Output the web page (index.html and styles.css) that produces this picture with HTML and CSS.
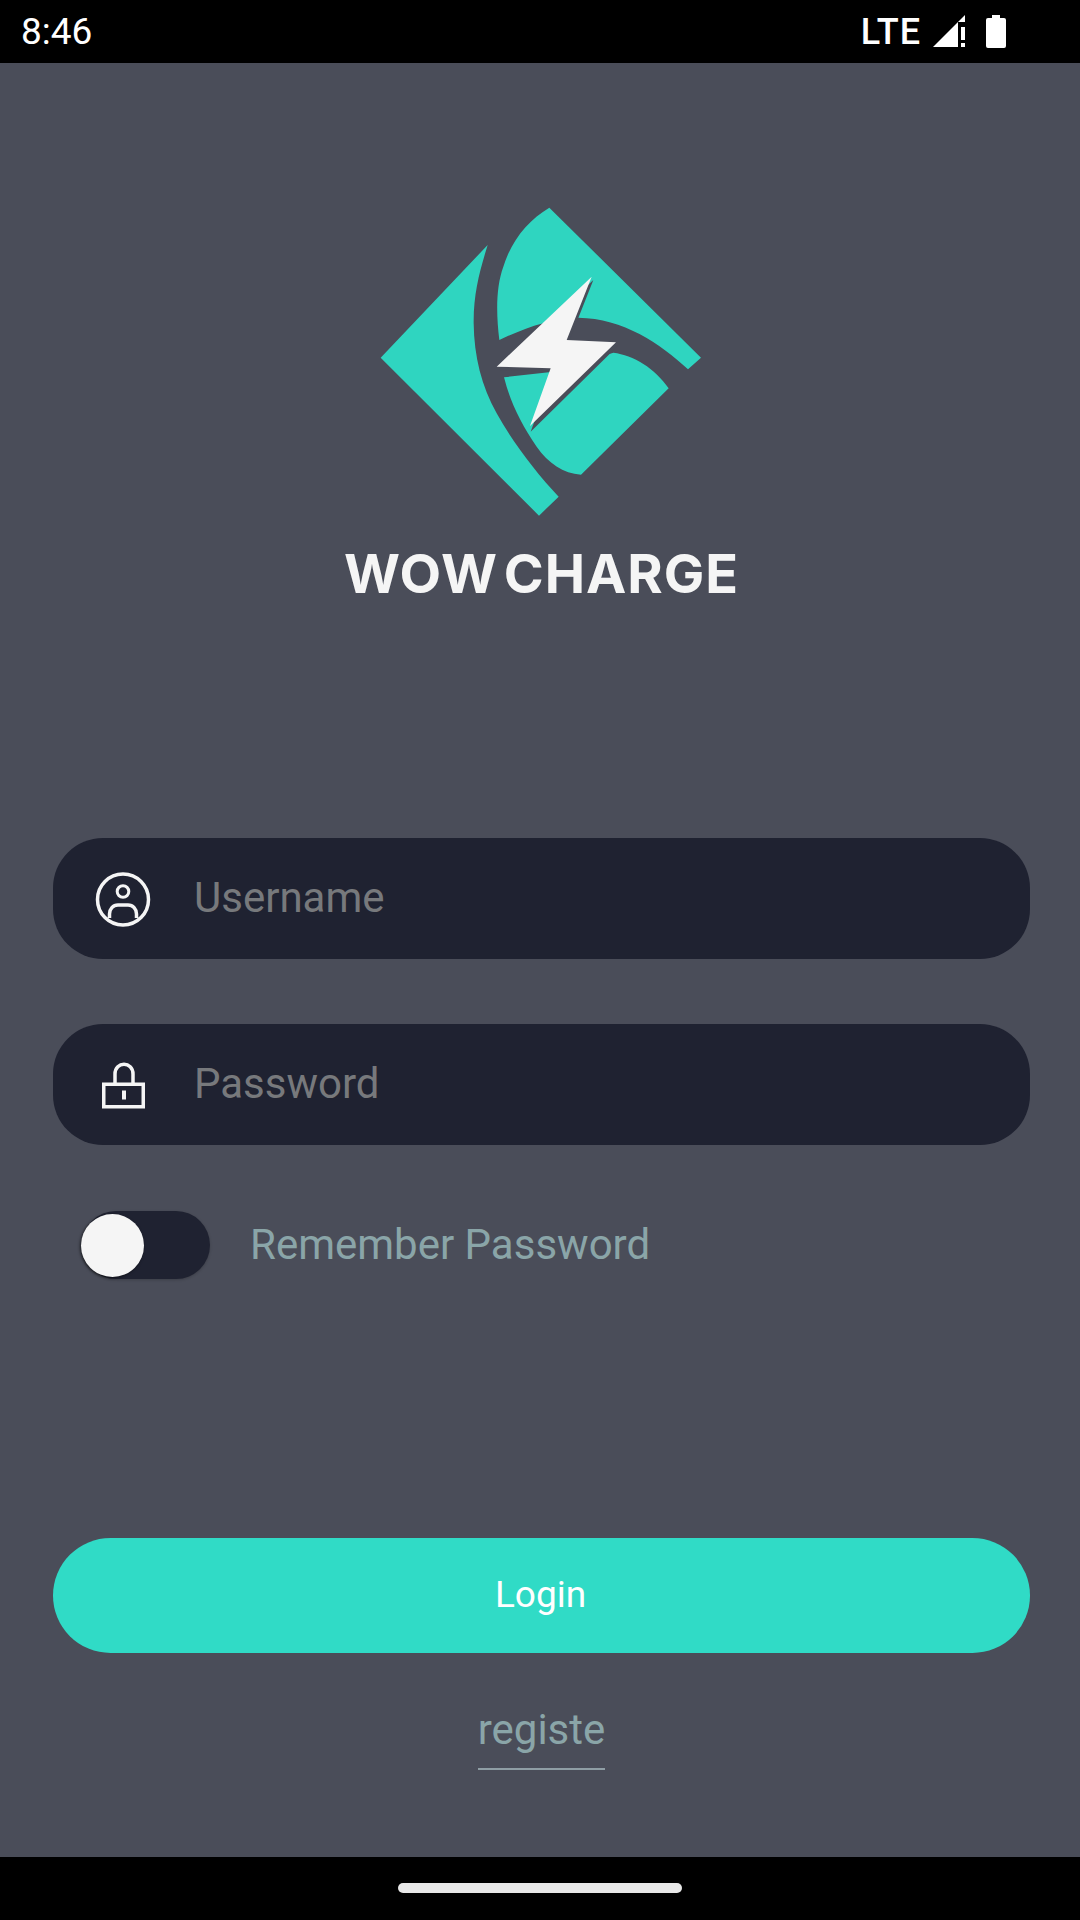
FILE: index.html
```html
<!DOCTYPE html>
<html lang="en">
  <head>
    <meta charset="UTF-8" />
    <meta name="viewport" content="width=device-width, initial-scale=1.0" />
    <title>Wow Charge</title>
    <link rel="stylesheet" href="styles.css">
  </head>
  <body>
    <div class="status-bar">
      <span class="time">8:46</span>
      <div class="status-icons">
        <span class="lte">LTE</span>
        <svg class="signal" width="34" height="34" viewBox="0 0 34 34">
          <path d="M0 32 L25 7 V32 Z" fill="#fff" />
          <path d="M25 7 L32 0 V7 Z" fill="#fff" />
          <rect x="28" y="12" width="4" height="13" fill="#fff" />
          <rect x="28" y="28" width="4" height="4" fill="#fff" />
        </svg>
        <svg class="battery" width="20" height="34" viewBox="0 0 20 34">
          <path d="M6 0 H14 V3 H18 Q20 3 20 5 V31 Q20 33 18 33 H2 Q0 33 0 31 V5 Q0 3 2 3 H6 Z" fill="#fff" />
        </svg>
      </div>
    </div>

    <div class="main">
      <svg class="logo" width="400" height="350" viewBox="0 0 1200 1050">
        <path fill="#2fd5c0" d="M443 195 L122 533 L597 1007 L656 950 C590 880 520 790 470 700 C425 620 402 530 401 430 C400 340 420 270 443 195 Z" />
        <path fill="#2fd5c0" d="M628 83 L1083 533 L1044 568 C960 490 850 415 715 413 C640 413 550 445 478 480 C468 400 468 320 490 260 C515 180 565 120 628 83 Z" />
        <path fill="#2fd5c0" d="M492 592 L640 575 L820 518 C880 525 945 565 986 625 L723 884 C670 880 625 850 590 800 C545 735 510 665 492 592 Z" />
        <path fill="#4a4d59" d="M760 300 L475 570 L637 575 L572 755 L834 497 L685 490 Z" />
        <path fill="#f5f5f5" d="M755 290 L470 560 L632 565 L570 738 L828 487 L680 480 Z" />
      </svg>
      <h1 class="brand">WOW CHARGE</h1>

      <form class="login-form">
        <div class="field">
          <svg class="field-icon" width="60" height="60" viewBox="0 0 60 60" fill="none" stroke="#f5f5f5">
            <circle cx="30" cy="30.5" r="25.5" stroke-width="3.5" />
            <circle cx="30" cy="22.5" r="5.8" stroke-width="3" />
            <path d="M16.5 49 V45 C16.5 40 20 36 25 36 H35 C40 36 43.5 40 43.5 45 V49" stroke-width="3.5" />
          </svg>
          <span class="placeholder">Username</span>
        </div>
        <div class="field">
          <svg class="field-icon" width="60" height="60" viewBox="0 0 60 60" fill="none" stroke="#f5f5f5">
            <path d="M22 28 V19 C22 6 40 6 40 19 V28" stroke-width="3.5" />
            <rect x="10.75" y="29.25" width="39.5" height="22.5" stroke-width="3.5" />
            <path d="M31 35.5 V44.5" stroke-width="4" />
          </svg>
          <span class="placeholder">Password</span>
        </div>
        <div class="remember">
          <div class="toggle">
            <div class="knob"></div>
          </div>
          <span class="remember-text">Remember Password</span>
        </div>
        <a class="btn">Login</a>
        <a class="register">registe</a>
      </form>
    </div>

    <div class="nav-bar">
      <div class="home-handle"></div>
    </div>
  </body>
</html>
```

FILE: styles.css
```css
body {
  margin: 0;
  width: 1080px;
  height: 1920px;
  display: flex;
  flex-direction: column;
  background-color: #4a4d59;
  font-family: Roboto, sans-serif;
  overflow: hidden;
}
.status-bar {
  height: 63px;
  background-color: #000;
  color: #fff;
  display: flex;
  justify-content: space-between;
  align-items: center;
  padding: 0 74px 0 21px;
}
.time {
  font-size: 37px;
}
.status-icons {
  display: flex;
  align-items: center;
}
.lte {
  font-size: 36px;
  font-weight: 500;
  letter-spacing: 1px;
  margin-right: 12px;
}
.signal {
  margin-right: 19px;
}
.main {
  flex: 1;
  display: flex;
  flex-direction: column;
  padding: 0 50px 0 53px;
}
.logo {
  display: block;
  margin: 117px 0 0 287px;
}
.brand {
  margin: 14px 0 0;
  font-family: Inter, sans-serif;
  font-weight: 700;
  font-size: 54px;
  line-height: 60px;
  letter-spacing: 1px;
  word-spacing: -8px;
  color: #f5f5f5;
  text-align: center;
}
.login-form {
  display: flex;
  flex-direction: column;
  margin-top: 234px;
}
.field {
  height: 121px;
  background-color: #1f2231;
  border-radius: 50px;
  display: flex;
  align-items: center;
  padding-left: 40px;
  margin-bottom: 65px;
}
.field-icon {
  margin-right: 41px;
}
.placeholder {
  font-size: 42px;
  color: #77797c;
  margin-top: -3px;
}
.remember {
  display: flex;
  align-items: center;
  margin: 1px 0 259px 29px;
}
.toggle {
  width: 128px;
  height: 68px;
  background-color: #1f2231;
  border-radius: 34px;
  display: flex;
  align-items: center;
  margin-right: 40px;
  box-shadow: 0 1px 3px rgba(0, 0, 0, 0.2);
}
.knob {
  width: 63px;
  height: 63px;
  border-radius: 50%;
  background-color: #f5f5f5;
  margin-left: -1px;
  box-shadow: -1px 1px 3px rgba(0, 0, 0, 0.6);
}
.remember-text {
  font-size: 42px;
  color: #8aa5a8;
  margin-top: -2px;
}
.btn {
  height: 113px;
  padding: 0 2px 2px 0;
  background-color: #30dbc6;
  border-radius: 58px;
  color: #fff;
  font-size: 37px;
  display: flex;
  align-items: center;
  justify-content: center;
}
.register {
  align-self: center;
  margin-top: 49px;
  padding: 0 0 10px;
  font-size: 42px;
  line-height: 56px;
  color: #8aa5a8;
  border-bottom: 2px solid #8f9ea5;
}
.nav-bar {
  height: 63px;
  background-color: #000;
  display: flex;
  justify-content: center;
  padding-top: 26px;
  box-sizing: border-box;
}
.home-handle {
  width: 284px;
  height: 10px;
  border-radius: 5px;
  background-color: #e8e8e8;
}
```
